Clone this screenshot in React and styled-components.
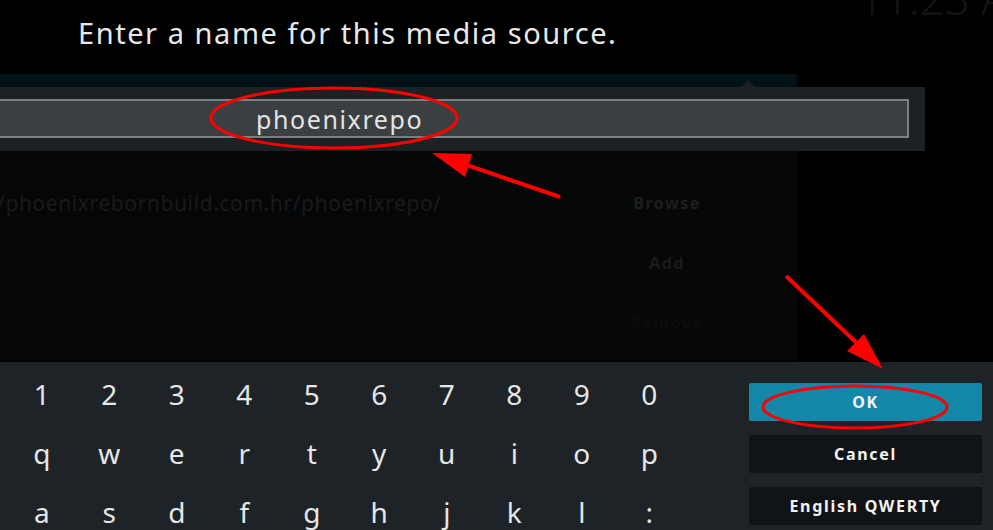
import React from "react";
import styled, { createGlobalStyle } from "styled-components";

const Global = createGlobalStyle`
  html, body {
    margin: 0;
    padding: 0;
    background: #000;
  }
  body {
    font-family: "Noto Sans", "Open Sans", sans-serif;
  }
`;

const Screen = styled.div`
  position: relative;
  width: 993px;
  height: 530px;
  overflow: hidden;
  background: #000;
  display: flex;
  flex-direction: column;
`;

const Header = styled.div`
  height: 74px;
  display: flex;
  justify-content: space-between;
  align-items: flex-start;
  flex-shrink: 0;
`;

const Title = styled.h1`
  margin: 0 0 0 78px;
  font-size: 29px;
  font-weight: 400;
  line-height: 65px;
  letter-spacing: 1.55px;
  color: #e8e8e8;
`;

const Clock = styled.div`
  margin-top: -32px;
  margin-right: -15px;
  font-size: 44px;
  font-weight: 300;
  color: #141414;
  line-height: 60px;
  white-space: nowrap;
`;

const Middle = styled.div`
  position: relative;
  height: 288px;
  flex-shrink: 0;
  display: flex;
`;

const BackDialog = styled.div`
  width: 797px;
  display: flex;
  flex-direction: column;
`;

const DialogStrip = styled.div`
  height: 13px;
  background: #021217;
`;

const DialogBody = styled.div`
  flex: 1;
  background: #050607;
  display: flex;
  padding-top: 86px;
`;

const SourcePath = styled.div`
  width: 573px;
  margin-left: -3px;
  font-size: 21px;
  color: #1a1a1a;
  line-height: 30px;
  letter-spacing: 0.6px;
  margin-top: 15px;
  white-space: nowrap;
`;

const Actions = styled.div`
  width: 194px;
  display: flex;
  flex-direction: column;
`;

const ActionButton = styled.div`
  height: 60px;
  display: flex;
  align-items: center;
  justify-content: center;
  font-size: 16px;
  font-weight: 700;
  letter-spacing: 1.5px;
  color: ${(p) => p.$color};
  background: #060708;
  border: 1px solid #08090a;
  box-sizing: border-box;
`;

const InputPanel = styled.div`
  position: absolute;
  left: 0;
  top: 13px;
  width: 925px;
  height: 64px;
  background: #1c2224;
  box-sizing: border-box;
  padding: 12px 16px 13px 0;
`;

const ScrollMark = styled.div`
  position: absolute;
  left: 741px;
  top: -7px;
  width: 0;
  height: 0;
  border-left: 7px solid transparent;
  border-right: 7px solid transparent;
  border-bottom: 7px solid #1a1f21;
`;

const InputField = styled.div`
  height: 100%;
  margin-left: -2px;
  box-sizing: border-box;
  background: #3a3f42;
  border: 2px solid #7a7f82;
  display: flex;
  align-items: center;
  padding-left: 256px;
  font-size: 25px;
  letter-spacing: 1.6px;
  color: #e4e4e4;
`;

const Keyboard = styled.div`
  flex: 1;
  background: #1d2326;
  display: flex;
  justify-content: space-between;
  padding: 0 11px 0 8px;
`;

const KeyGrid = styled.div`
  display: grid;
  grid-template-columns: repeat(10, 67.5px);
  grid-auto-rows: 59px;
  padding-top: 3px;
`;

const Key = styled.div`
  text-align: center;
  font-size: 28px;
  line-height: 59px;
  color: #e6e6e6;
`;

const SideButtons = styled.div`
  width: 233px;
  display: flex;
  flex-direction: column;
  gap: 14px;
  padding-top: 21px;
`;

const SideButton = styled.div`
  height: 38px;
  border-radius: 2px;
  background: ${(p) => (p.$active ? "#1287a8" : "#101416")};
  display: flex;
  align-items: center;
  justify-content: center;
  font-size: 16px;
  font-weight: 700;
  letter-spacing: 1.7px;
  color: #f2f2f2;
`;

const Overlay = styled.svg`
  position: absolute;
  left: 0;
  top: 0;
  pointer-events: none;
`;

const rows = [
  ["1", "2", "3", "4", "5", "6", "7", "8", "9", "0"],
  ["q", "w", "e", "r", "t", "y", "u", "i", "o", "p"],
  ["a", "s", "d", "f", "g", "h", "j", "k", "l", ":"],
];

export default function App() {
  return (
    <Screen>
      <Global />
      <Header>
        <Title>Enter a name for this media source.</Title>
        <Clock>11:23 A</Clock>
      </Header>

      <Middle>
        <BackDialog>
          <DialogStrip />
          <DialogBody>
            <SourcePath>/phoenixrebornbuild.com.hr/phoenixrepo/</SourcePath>
            <Actions>
              <ActionButton $color="#1e1e1e">Browse</ActionButton>
              <ActionButton $color="#1b1b1b">Add</ActionButton>
              <ActionButton $color="#0c0c0c">Remove</ActionButton>
            </Actions>
          </DialogBody>
        </BackDialog>

        <InputPanel>
          <ScrollMark />
          <InputField>phoenixrepo</InputField>
        </InputPanel>
      </Middle>

      <Keyboard>
        <KeyGrid>
          {rows.flat().map((k, i) => (
            <Key key={i}>{k}</Key>
          ))}
        </KeyGrid>
        <SideButtons>
          <SideButton $active>OK</SideButton>
          <SideButton>Cancel</SideButton>
          <SideButton>English QWERTY</SideButton>
        </SideButtons>
      </Keyboard>

      <Overlay width="993" height="530" viewBox="0 0 993 530">
        <ellipse cx="334" cy="118" rx="123" ry="30" fill="none" stroke="#f00" strokeWidth="3" />
        <ellipse cx="855" cy="407" rx="92" ry="21" fill="none" stroke="#f00" strokeWidth="3" />
        <line x1="560" y1="197" x2="455" y2="161" stroke="#f00" strokeWidth="4" />
        <polygon points="432,153 472,154 465,177" fill="#f00" />
        <line x1="786" y1="276" x2="862" y2="348" stroke="#f00" strokeWidth="4" />
        <polygon points="883,369 864,334 847,351" fill="#f00" />
      </Overlay>
    </Screen>
  );
}
